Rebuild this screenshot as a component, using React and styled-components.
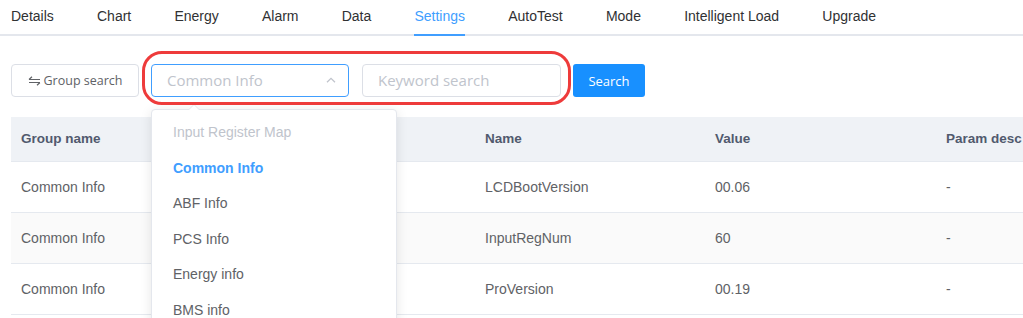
import styled, { createGlobalStyle, css } from "styled-components";

const GlobalStyle = createGlobalStyle`
  body {
    margin: 0;
    background: #fff;
    overflow: hidden;
    font-family: "Liberation Sans", Arial, sans-serif;
  }
  * { box-sizing: border-box; }
`;

const Page = styled.div`
  width: 1023px;
  height: 318px;
  overflow: hidden;
`;

const TabBar = styled.div`
  display: flex;
  height: 36px;
  padding-left: 11px;
  border-bottom: 2px solid #e4e7ed;
`;

const Tab = styled.div`
  position: relative;
  padding: 0 21.6px;
  line-height: 32px;
  font-size: 14px;
  white-space: nowrap;
  color: ${(p) => (p.$active ? "#409eff" : "#303133")};
  &:first-child {
    padding-left: 0;
  }
  ${(p) =>
    p.$active &&
    css`
      &::after {
        content: "";
        position: absolute;
        left: 21.6px;
        right: 21.6px;
        bottom: -2px;
        height: 2px;
        background: #409eff;
      }
    `}
`;

const Content = styled.div`
  padding: 28px 0 0 11px;
`;

const Toolbar = styled.div`
  display: flex;
  align-items: center;
  gap: 12px;
  height: 33px;
`;

const ControlFont = css`
  font-family: "Open Sans", "Noto Sans", sans-serif;
`;

const GroupButton = styled.button`
  ${ControlFont};
  width: 128px;
  height: 33px;
  display: flex;
  align-items: center;
  justify-content: center;
  gap: 3px;
  border: 1px solid #dcdfe6;
  border-radius: 4px;
  background: #fff;
  color: #606266;
  font-size: 12.5px;
  padding: 0;
`;

const Highlight = styled.div`
  position: relative;
  display: flex;
  gap: 13px;
  &::after {
    content: "";
    position: absolute;
    top: -13px;
    bottom: -8px;
    left: -9px;
    right: -10px;
    border: 3px solid #ee3b3b;
    border-radius: 20px;
    pointer-events: none;
    z-index: 20;
  }
`;

const Select = styled.div`
  ${ControlFont};
  position: relative;
  width: 198px;
  height: 33px;
  display: flex;
  align-items: center;
  justify-content: space-between;
  padding: 0 12px 2px 15px;
  border: 1px solid #409eff;
  border-radius: 4px;
  font-size: 15px;
  color: #c0c4cc;
`;

const TextInput = styled.input`
  ${ControlFont};
  width: 199px;
  height: 33px;
  padding: 0 15px 2px;
  border: 1px solid #dcdfe6;
  border-radius: 4px;
  font-size: 15px;
  outline: none;
  &::placeholder {
    color: #c0c4cc;
  }
`;

const SearchButton = styled.button`
  ${ControlFont};
  width: 72px;
  height: 33px;
  border: none;
  border-radius: 3px;
  background: #1890ff;
  color: #fff;
  font-size: 13px;
  padding: 0;
`;

const Dropdown = styled.div`
  position: absolute;
  top: calc(100% + 13px);
  left: -1px;
  width: 246px;
  background: #fff;
  border: 1px solid #e4e7ed;
  border-radius: 4px;
  box-shadow: 0 2px 12px rgba(0, 0, 0, 0.1);
  padding: 5px 0 0;
  z-index: 10;
  font-family: "Liberation Sans", Arial, sans-serif;
  &::before,
  &::after {
    content: "";
    position: absolute;
    left: 36px;
    border-style: solid;
    border-width: 0 6px 6px;
    border-color: transparent;
  }
  &::before {
    top: -6px;
    border-bottom-color: #e4e7ed;
  }
  &::after {
    top: -5px;
    border-bottom-color: #fff;
  }
`;

const Option = styled.div`
  height: 35.5px;
  line-height: 35.5px;
  padding: 0 21px;
  font-size: 14px;
  white-space: nowrap;
  color: ${(p) =>
    p.$title ? "#c0c4cc" : p.$selected ? "#409eff" : "#606266"};
  font-weight: ${(p) => (p.$selected ? "bold" : "normal")};
`;

const Table = styled.table`
  margin-top: 20px;
  border-collapse: collapse;
  table-layout: fixed;
  width: 1155px;
`;

const Col = styled.col`
  width: ${(p) => p.$w}px;
`;

const Th = styled.th`
  height: 44px;
  padding: 0 10px;
  background: #eff2f6;
  text-align: left;
  font-size: 13.5px;
  font-weight: bold;
  color: #515a6e;
  border-bottom: 1px solid #e5e9ef;
`;

const Row = styled.tr`
  background: ${(p) => (p.$striped ? "#fafafa" : "#fff")};
`;

const Td = styled.td`
  height: 51px;
  padding: 0 10px;
  font-size: 14px;
  color: #606266;
  border-bottom: 1px solid #e5e9ef;
  white-space: nowrap;
`;

const SwapIcon = () => (
  <svg width="13" height="10" viewBox="0 0 13 10" fill="none" stroke="#606266" strokeWidth="1.2">
    <path d="M1 3.5H12M1 3.5L4 0.8" />
    <path d="M1 6.5H12M12 6.5L9 9.2" />
  </svg>
);

const ChevronUp = () => (
  <svg width="10" height="6" viewBox="0 0 10 6" fill="none" stroke="#c0c4cc" strokeWidth="1.3">
    <path d="M1 5.3L5 1.3L9 5.3" />
  </svg>
);

const tabs = ["Details", "Chart", "Energy", "Alarm", "Data", "Settings", "AutoTest", "Mode", "Intelligent Load", "Upgrade"];

const options = ["Common Info", "ABF Info", "PCS Info", "Energy info", "BMS info"];

// second column sits under the open dropdown
const rows = [
  ["Common Info", "", "LCDBootVersion", "00.06", "-"],
  ["Common Info", "", "InputRegNum", "60", "-"],
  ["Common Info", "", "ProVersion", "00.19", "-"],
];

export default function App() {
  return (
    <Page>
      <GlobalStyle />
      <TabBar>
        {tabs.map((t) => (
          <Tab key={t} $active={t === "Settings"}>
            {t}
          </Tab>
        ))}
      </TabBar>
      <Content>
        <Toolbar>
          <GroupButton>
            <SwapIcon />
            Group search
          </GroupButton>
          <Highlight>
            <Select>
              <span>Common Info</span>
              <ChevronUp />
              <Dropdown>
                <Option $title>Input Register Map</Option>
                {options.map((o) => (
                  <Option key={o} $selected={o === "Common Info"}>
                    {o}
                  </Option>
                ))}
              </Dropdown>
            </Select>
            <TextInput placeholder="Keyword search" />
          </Highlight>
          <SearchButton>Search</SearchButton>
        </Toolbar>
        <Table>
          <colgroup>
            <Col $w={232} />
            <Col $w={232} />
            <Col $w={230} />
            <Col $w={231} />
            <Col $w={230} />
          </colgroup>
          <thead>
            <tr>
              <Th>Group name</Th>
              <Th></Th>
              <Th>Name</Th>
              <Th>Value</Th>
              <Th>Param desc</Th>
            </tr>
          </thead>
          <tbody>
            {rows.map((r, i) => (
              <Row key={i} $striped={i % 2 === 1}>
                {r.map((c, j) => (
                  <Td key={j}>{c}</Td>
                ))}
              </Row>
            ))}
          </tbody>
        </Table>
      </Content>
    </Page>
  );
}
